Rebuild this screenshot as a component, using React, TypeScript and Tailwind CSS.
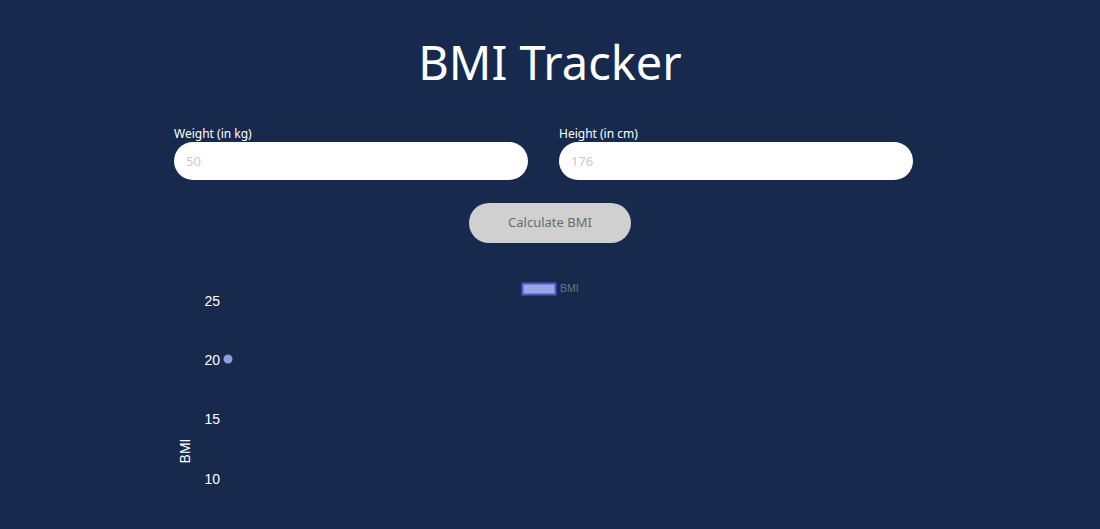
export default function App() {
  const ticks = [
    { v: 25, y: 30 },
    { v: 20, y: 89 },
    { v: 15, y: 148 },
    { v: 10, y: 208 },
  ];

  return (
    <div className="h-[529px] overflow-hidden bg-[#172a4d] font-['Noto_Sans',sans-serif]">
      <h1 className="pt-[26px] text-center text-[47px] leading-[72px] text-white">
        BMI Tracker
      </h1>

      <div className="ml-[174px] mt-[28px] flex w-[739px] gap-[31px]">
        <label className="flex flex-1 flex-col">
          <span className="text-[12px] leading-[16px] text-white">Weight (in kg)</span>
          <input
            type="number"
            placeholder="50"
            className="h-[38px] rounded-full bg-white px-3 text-[13px] text-gray-700 outline-none placeholder:text-[#c9c9c9]"
          />
        </label>
        <label className="flex flex-1 flex-col">
          <span className="text-[12px] leading-[16px] text-white">Height (in cm)</span>
          <input
            type="number"
            placeholder="176"
            className="h-[38px] rounded-full bg-white px-3 text-[13px] text-gray-700 outline-none placeholder:text-[#c9c9c9]"
          />
        </label>
      </div>

      <div className="mt-[23px] flex justify-center">
        <button
          disabled
          className="h-[40px] w-[162px] rounded-full bg-[#d0d0d0] text-[13px] text-[#6b6b6b]"
        >
          Calculate BMI
        </button>
      </div>

      <div className="ml-[174px] mt-[28px] w-[750px]">
        <svg width="750" height="260" viewBox="0 0 750 260">
          <rect x="348.5" y="12.5" width="33" height="11" fill="#9ba5ea" stroke="#4b5cc7" strokeWidth="2" />
          <text x="386" y="21" fontSize="10.5" fill="#6b7385" fontFamily="Liberation Sans, Arial, sans-serif">
            BMI
          </text>
          {ticks.map((t) => (
            <text
              key={t.v}
              x="46"
              y={t.y + 5}
              textAnchor="end"
              fontSize="14"
              fill="#ffffff"
              fontFamily="Liberation Sans, Arial, sans-serif"
            >
              {t.v}
            </text>
          ))}
          <circle cx="54" cy="88" r="4.5" fill="#8e9ae2" />
          <text
            x="0"
            y="0"
            transform="translate(16 180) rotate(-90)"
            textAnchor="middle"
            fontSize="14"
            fill="#ffffff"
            fontFamily="Liberation Sans, Arial, sans-serif"
          >
            BMI
          </text>
        </svg>
      </div>
    </div>
  );
}
